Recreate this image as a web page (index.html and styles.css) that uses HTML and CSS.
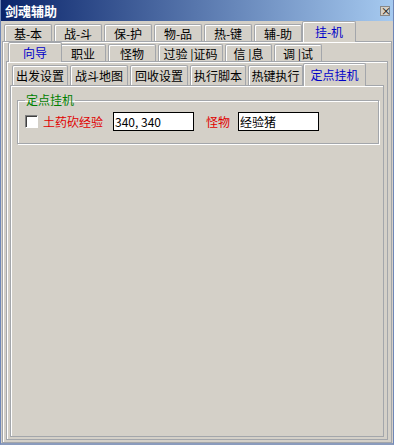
FILE: index.html
```html
<!DOCTYPE html>
<html>
<head>
    <meta charset="utf-8" />
    <title>剑魂辅助</title>
    <link rel="stylesheet" href="styles.css">
</head>
<body>
    <div class="window">
        <div class="titlebar">
            <span class="title">剑魂辅助</span>
            <span class="close">×</span>
        </div>
        <div class="tabs tabs1">
            <div class="tab w48">基-本</div>
            <div class="tab w48">战-斗</div>
            <div class="tab w48">保-护</div>
            <div class="tab w48">物-品</div>
            <div class="tab w48">热-键</div>
            <div class="tab w48">辅-助</div>
            <div class="tab w48 active">挂-机</div>
        </div>
        <div class="panel panel1">
            <div class="tabs tabs2">
                <div class="tab active" style="width:50px">向导</div>
                <div class="tab" style="width:46px">职业</div>
                <div class="tab" style="width:48px">怪物</div>
                <div class="tab" style="width:65px">过验 |证码</div>
                <div class="tab" style="width:47px">信 |息</div>
                <div class="tab" style="width:48px">调 |试</div>
            </div>
            <div class="panel panel2">
                <div class="tabs tabs3">
                    <div class="tab" style="width:56px">出发设置</div>
                    <div class="tab" style="width:58px">战斗地图</div>
                    <div class="tab" style="width:58px">回收设置</div>
                    <div class="tab" style="width:56px">执行脚本</div>
                    <div class="tab" style="width:55px">热键执行</div>
                    <div class="tab active" style="width:59px">定点挂机</div>
                </div>
                <div class="panel panel3">
                    <fieldset class="group">
                        <legend>定点挂机</legend>
                        <div class="row">
                            <span class="check"></span>
                            <span class="red lbl1">土药砍经验</span>
                            <span class="edit">340, 340</span>
                            <span class="red lbl2">怪物</span>
                            <span class="edit">经验猪</span>
                        </div>
                    </fieldset>
                </div>
            </div>
        </div>
    </div>
</body>
</html>
```

FILE: styles.css
```css
* {
    margin: 0;
    padding: 0;
    box-sizing: border-box;
}

body {
    width: 394px;
    height: 445px;
    overflow: hidden;
    font-family: "Noto Sans CJK SC", "Liberation Sans", sans-serif;
    font-size: 12px;
    background: #d4d0c8;
}

.window {
    width: 394px;
    height: 445px;
    display: flex;
    flex-direction: column;
    background: #d4d0c8;
    border-left: 1px solid #6f87b8;
    border-right: 1px solid #6f87b8;
    border-bottom: 2px solid #8a9bbd;
}

.titlebar {
    height: 21px;
    display: flex;
    align-items: center;
    justify-content: space-between;
    padding: 0 3px 0 4px;
    background: linear-gradient(to right, #0a246a, #a6caf0);
    flex-shrink: 0;
}

.title {
    color: #fff;
    font-weight: bold;
    font-size: 13px;
    line-height: 14px;
}

.close {
    width: 10px;
    height: 10px;
    background: #d4d0c8;
    border: 1px solid #888;
    font-size: 10px;
    line-height: 8px;
    text-align: center;
    color: #000;
}

.tabs {
    display: flex;
    align-items: flex-end;
    flex-shrink: 0;
}

.tabs1 {
    height: 20px;
    padding-left: 3px;
}

.tabs2 {
    height: 19px;
    padding-left: 4px;
}

.tabs3 {
    height: 23px;
    padding-left: 2px;
}

.tab {
    height: 17px;
    margin-right: 2px;
    border: 1px solid #a3a6ab;
    border-bottom: none;
    border-radius: 2px 2px 0 0;
    box-shadow: inset 1px 1px #fff;
    text-align: center;
    line-height: 17px;
    color: #000;
    white-space: nowrap;
}

.w48 {
    width: 48px;
}

.tabs3 .tab {
    height: 20px;
    line-height: 19px;
}

.tab.active {
    position: relative;
    z-index: 1;
    height: 21px;
    margin: 0 0 -1px -2px;
    padding: 0 2px;
    background: #d4d0c8;
    color: #0000c8;
    line-height: 19px;
}

.tab.active + .tab {
    margin-left: -2px;
}

.tabs1 .tab.active {
    width: 54px;
}

.tabs2 .tab.active {
    width: 54px !important;
    height: 20px;
}

.tabs3 .tab.active {
    width: 63px !important;
    height: 23px;
    line-height: 22px;
}

.panel {
    flex: 1;
    display: flex;
    flex-direction: column;
    border: 1px solid #a3a6ab;
    box-shadow: inset 1px 1px #fff;
}

.panel1 {
    margin: 0 1px 0 1px;
    padding: 0 3px 2px 3px;
}

.panel2 {
    padding: 0 3px 2px 3px;
}

.panel3 {
    padding: 7px 4px 0 6px;
}

.group {
    width: 362px;
    height: 51px;
    border: 1px solid #a3a6ab;
    box-shadow: 1px 1px #fff, inset 1px 1px #fff;
    padding: 0 7px;
}

.group legend {
    padding: 0 1px;
    color: #008000;
    line-height: 14px;
}

.row {
    display: flex;
    align-items: center;
    height: 19px;
    margin-top: 5px;
}

.check {
    width: 13px;
    height: 13px;
    background: #fff;
    border: 1px solid;
    border-color: #808080 #fff #fff #808080;
    box-shadow: inset 1px 1px #404040;
    margin-right: 5px;
}

.red {
    color: #e00000;
}

.lbl1 {
    width: 70px;
}

.lbl2 {
    width: 32px;
    margin-left: 12px;
}

.edit {
    width: 81px;
    height: 19px;
    background: #fff;
    border: 1px solid #000;
    padding-left: 1px;
    line-height: 17px;
    color: #000;
}
```
